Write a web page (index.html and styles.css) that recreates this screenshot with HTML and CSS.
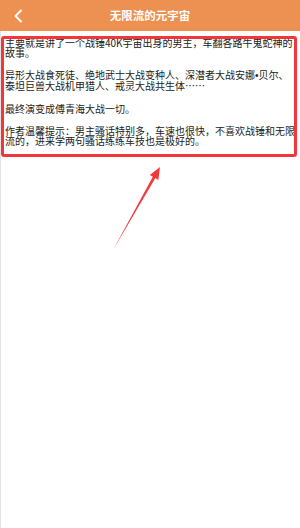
FILE: index.html
```html
<!DOCTYPE html>
<html lang="zh">
<head>
<meta charset="utf-8">
<link rel="stylesheet" href="styles.css">
</head>
<body>
<div class="page">
  <header class="bar">
    <svg class="back" width="10" height="14" viewBox="0 0 10 14"><path d="M8 1.5 L2.5 7 L8 12.5" fill="none" stroke="#fff" stroke-width="2" stroke-linecap="round" stroke-linejoin="round"/></svg>
    <div class="title">无限流的元宇宙</div>
  </header>
  <main class="content">
    <p>主要就是讲了一个战锤40K宇宙出身的男主，车翻各路牛鬼蛇神的故事。</p>
    <p>异形大战食死徒、绝地武士大战变种人、深潜者大战安娜<span class="dot">•</span>贝尔、泰坦巨兽大战机甲猎人、戒灵大战共生体……</p>
    <p>最终演变成傅青海大战一切。</p>
    <p>作者温馨提示：男主骚话特别多，车速也很快，不喜欢战锤和无限流的，进来学两句骚话练练车技也是极好的。</p>
  </main>
  <div class="mark"></div>
  <svg class="arrow" width="300" height="528" viewBox="0 0 300 528"><polygon points="113,250 152.8,176.7 149.8,174.9 160,167 158.4,179.9 155.4,178.1" fill="#f23a3c"/></svg>
</div>
</body>
</html>
```
FILE: styles.css
```css
html, body {
  margin: 0;
  padding: 0;
  background: #fff;
}
.page {
  position: relative;
  width: 300px;
  height: 528px;
  overflow: hidden;
  font-family: "Noto Sans CJK SC", "Noto Sans", sans-serif;
}
.bar {
  height: 31px;
  background: #ec9152;
  display: flex;
  align-items: center;
  justify-content: center;
  position: relative;
}
.back {
  position: absolute;
  left: 13px;
  top: 9px;
}
.title {
  color: #fff;
  font-size: 11.5px;
  font-weight: bold;
  line-height: 31px;
}
.content {
  padding: 6.5px 3px 0 5px;
  color: #222;
  font-size: 10px;
  line-height: 10px;
  border-left: 1px solid #e4e4e4;
  height: 490px;
}
.content p {
  margin: 0 0 12.5px -1px;
}
.dot {
  font-family: "Liberation Sans", sans-serif;
}
.mark {
  position: absolute;
  left: 1px;
  top: 36px;
  width: 290px;
  height: 115px;
  border: 3px solid #f2363c;
  border-radius: 3px;
}
.arrow {
  position: absolute;
  left: 0;
  top: 0;
}
```
